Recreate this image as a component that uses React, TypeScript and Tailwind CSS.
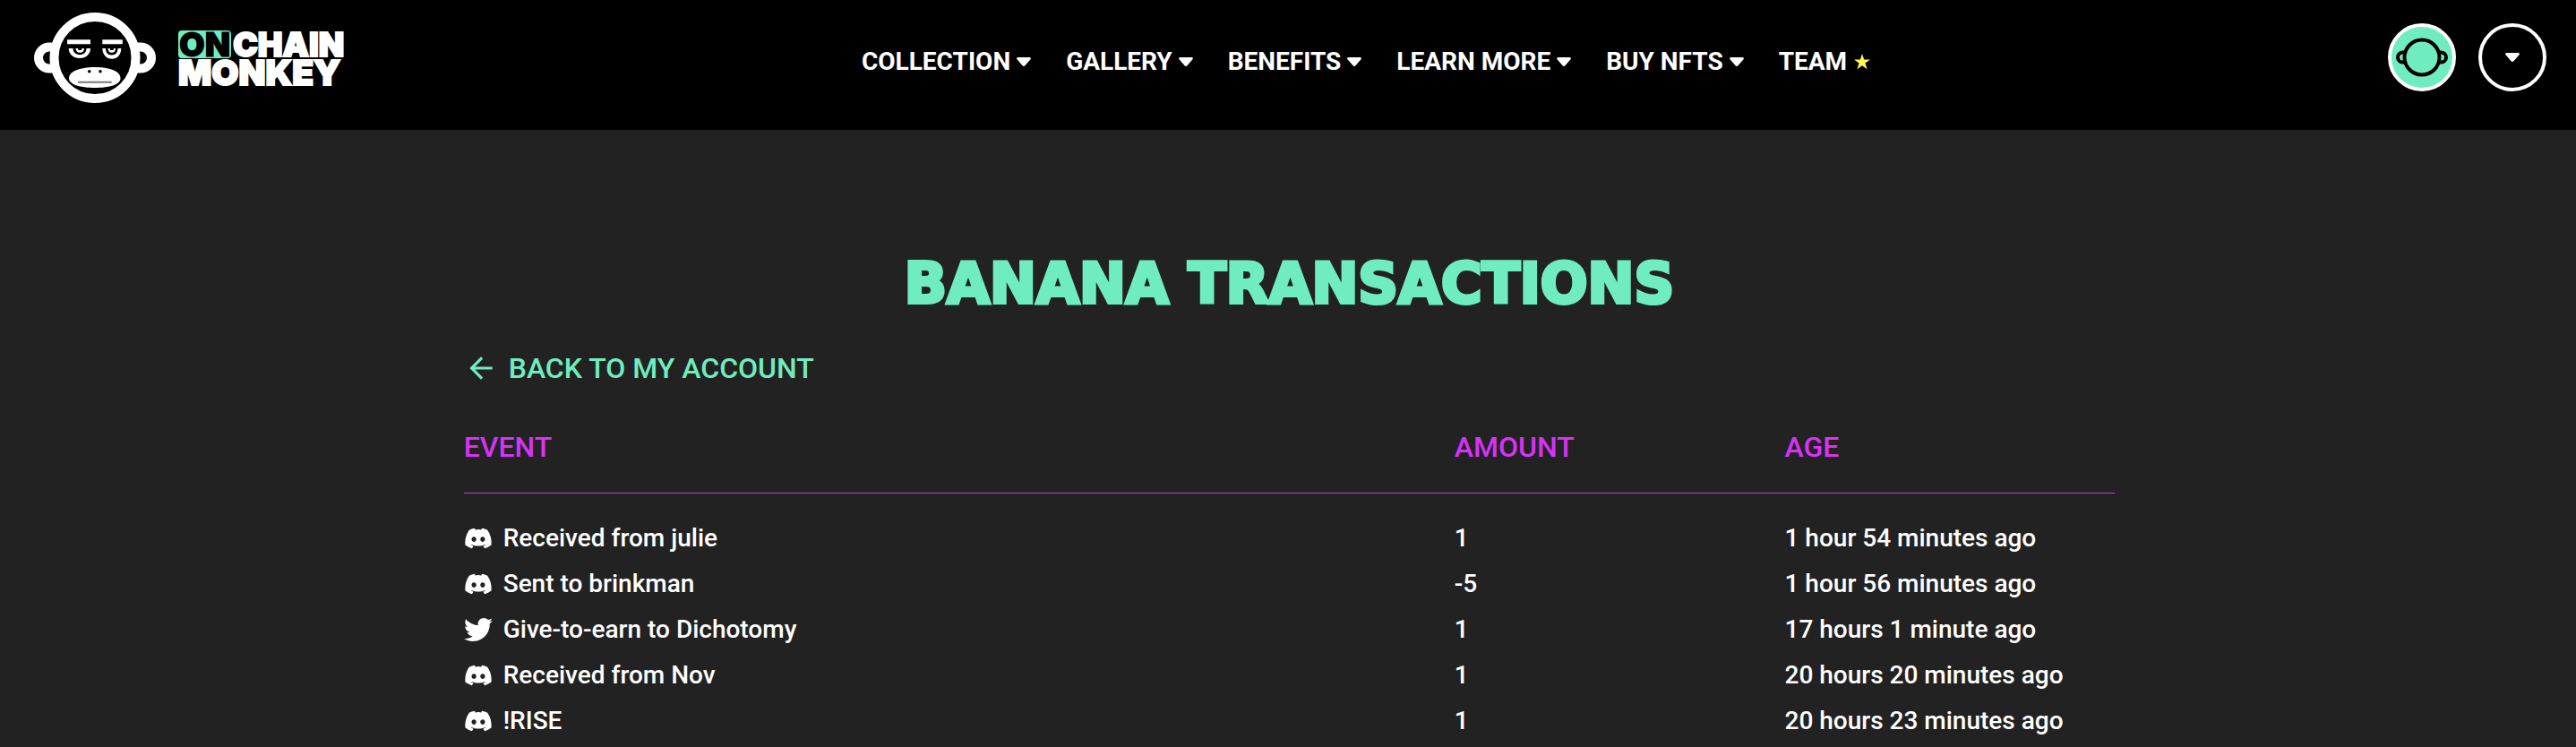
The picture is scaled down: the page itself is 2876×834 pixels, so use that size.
import { FaDiscord, FaTwitter } from "react-icons/fa";
import { MdArrowBack } from "react-icons/md";

const navItems = ["Collection", "Gallery", "Benefits", "Learn more", "Buy NFTs"];

type Source = "discord" | "twitter";

const transactions: { source: Source; event: string; amount: number; age: string }[] = [
  { source: "discord", event: "Received from julie", amount: 1, age: "1 hour 54 minutes ago" },
  { source: "discord", event: "Sent to brinkman", amount: -5, age: "1 hour 56 minutes ago" },
  { source: "twitter", event: "Give-to-earn to Dichotomy", amount: 1, age: "17 hours 1 minute ago" },
  { source: "discord", event: "Received from Nov", amount: 1, age: "20 hours 20 minutes ago" },
  { source: "discord", event: "!RISE", amount: 1, age: "20 hours 23 minutes ago" },
];

function Caret() {
  return (
    <svg viewBox="0 0 16 10" className="h-[10px] w-4" fill="currentColor" aria-hidden="true">
      <path d="M1.6 0h12.8c1.3 0 1.9 1.3 1.1 2.2L9.4 9.2c-.8.9-2 .9-2.8 0L.5 2.2C-.3 1.3.3 0 1.6 0Z" />
    </svg>
  );
}

function Star() {
  return (
    <svg viewBox="0 0 20 20" className="h-[18px] w-[18px] text-[#fbf94f]" fill="currentColor" aria-hidden="true">
      <path d="M10 0l2.4 7.2H20l-6.1 4.6 2.3 7.4L10 14.7l-6.2 4.5 2.3-7.4L0 7.2h7.6z" />
    </svg>
  );
}

function MonkeyLogo() {
  return (
    <svg viewBox="0 0 136 101" className="h-[101px] w-[136px]" aria-hidden="true">
      <path
        d="M22 38.5h-5a12 12 0 0 0 0 24h5M114 38.5h5a12 12 0 0 1 0 24h-5"
        fill="none"
        stroke="#fff"
        strokeWidth="10"
      />
      <circle cx="68" cy="50.5" r="45.5" fill="#000" stroke="#fff" strokeWidth="10" />
      <path d="M37 30.3h26v5H37zM76.300 30.300h22.500v5H76.300z" fill="#fff" />
      <path
        d="M38.700 40H63c0 6.500-5 11-12 11s-12.300-4.500-12.300-11ZM76.300 40h21c0 7-4.300 11.800-10.300 11.800S76.300 47 76.300 40Z"
        fill="#fff"
      />
      <path d="M43.500 40h15c0 4.500-3 7-7.300 7s-7.700-2.500-7.700-7ZM80 40h13.500c0 4.800-2.500 7.500-6.800 7.500S80 44.800 80 40Z" fill="#000" />
      <path d="M46.500 40h9.500c0 3-1.800 4.700-4.700 4.700s-4.800-1.700-4.800-4.700ZM82.500 40h8.500c0 3-1.500 4.700-4.200 4.700s-4.300-1.700-4.300-4.700Z" fill="#fff" />
      <path d="M49.300 40h4v2h-4zM84.800 40h4v2h-4z" fill="#000" />
      <path d="M39 73.500C39 66 50 61 68 61s28.500 5 28.500 12.500C96.500 80.500 84 84 68 84s-29-3.500-29-10.500Z" fill="#fff" />
      <circle cx="61.700" cy="65.700" r="1.800" fill="#000" />
      <circle cx="74" cy="65.700" r="1.800" fill="#000" />
      <path d="M49 77.800h37.700" stroke="#777" strokeWidth="2" />
    </svg>
  );
}

function MonkeyAvatar() {
  return (
    <svg viewBox="0 0 60 44" className="h-11 w-[60px]" fill="none" stroke="#000" strokeWidth="4" aria-hidden="true">
      <circle cx="30" cy="22" r="19.500" />
      <path d="M10 16.500H8.500a5.500 5.500 0 0 0 0 11H10M50 16.500h1.500a5.500 5.500 0 0 1 0 11H50" />
    </svg>
  );
}

export default function App() {
  return (
    <div className="min-h-screen bg-[#222222] font-['Roboto',sans-serif] text-white">
      <header className="grid h-[145px] grid-cols-[1fr_auto_1fr] items-start bg-black">
        <a href="#home" aria-label="OnChain Monkey" className="flex items-center gap-[25px] pt-[14px] pl-[38px]">
          <MonkeyLogo />
          <span className="flex flex-col font-['Inter',sans-serif] leading-[31px] font-black uppercase">
            <span className="flex items-center gap-0.5 text-[37px]">
              <span className="rounded-[4px] bg-[#70edc0] px-px text-black [-webkit-text-stroke:1px_#000]">On</span>
              <span className="[-webkit-text-stroke:2px_#fff]">Chain</span>
            </span>
            <span className="text-[39px] [-webkit-text-stroke:2px_#fff]">Monkey</span>
          </span>
        </a>

        <nav className="flex items-center gap-[39px] pt-[50px] pl-[174px] text-[28px] leading-[38px] font-bold" aria-label="Main">
          {navItems.map((item) => (
            <button key={item} type="button" className="flex items-center gap-[7px] uppercase">
              {item}
              <Caret />
            </button>
          ))}
          <a href="#team" className="flex items-center gap-2 uppercase">
            Team
            <Star />
          </a>
        </nav>

        <div className="flex items-center justify-end gap-[25px] pt-[26px] pr-[33px]">
          <button
            type="button"
            aria-label="Account"
            className="flex size-[76px] items-center justify-center rounded-full border-4 border-white bg-[#70edc0]"
          >
            <MonkeyAvatar />
          </button>
          <button
            type="button"
            aria-label="Account menu"
            className="flex size-[76px] items-center justify-center rounded-full border-4 border-white"
          >
            <Caret />
          </button>
        </div>
      </header>

      <main className="mr-[17.9%] ml-[18%] pt-[136px]">
        <h1 className="text-center font-['DejaVu_Sans',sans-serif] text-[62px] leading-[72px] font-bold text-[#70edc0] uppercase [-webkit-text-stroke:4px_#70edc0]">
          Banana Transactions
        </h1>

        <a href="#account" className="mt-9 flex w-fit items-center gap-3 text-[32px] leading-11 font-medium text-[#70edc0] uppercase">
          <MdArrowBack className="size-[38px]" aria-hidden="true" />
          Back to my account
        </a>

        <table className="mt-10 w-full table-fixed text-left">
          <thead>
            <tr className="border-b border-[#c040d6] text-[32px] leading-[52px] text-[#d633f5] uppercase">
              <th className="w-3/5 pb-[25px] font-medium">Event</th>
              <th className="w-1/5 pb-[25px] font-medium">Amount</th>
              <th className="w-1/5 pb-[25px] font-medium">Age</th>
            </tr>
          </thead>
          <tbody className="text-[28px] leading-[51px] font-medium before:block before:h-6">
            {transactions.map((t) => (
              <tr key={t.event}>
                <td>
                  <span className="flex items-center gap-3">
                    {t.source === "discord" ? (
                      <FaDiscord className="size-8" aria-label="Discord" />
                    ) : (
                      <FaTwitter className="size-8" aria-label="Twitter" />
                    )}
                    {t.event}
                  </span>
                </td>
                <td>{t.amount}</td>
                <td>{t.age}</td>
              </tr>
            ))}
          </tbody>
        </table>
      </main>
    </div>
  );
}
